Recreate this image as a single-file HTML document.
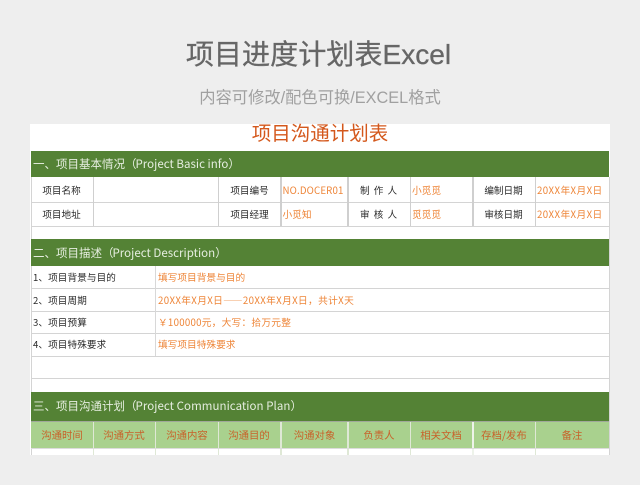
<!DOCTYPE html>
<html lang="zh">
<head>
<meta charset="utf-8">
<style>
html,body{margin:0;padding:0;background:#eeeeee;}
body{width:640px;height:485px;position:relative;overflow:hidden;font-family:"Liberation Sans","Noto Sans CJK SC",sans-serif;}
div{position:absolute;white-space:nowrap;}
.h{background:#548235;left:31px;width:578px;}
.ht{color:#e6eee0;font-family:"Noto Sans CJK SC",sans-serif;font-size:11.5px;left:33px;line-height:20px;}
.ht span{letter-spacing:.02px;margin-left:-1px;}
.hl{background:#d4d4d4;left:31px;width:578px;height:1px;}
.v{background:#cfcfcf;width:1.4px;}
.c{font-family:"Noto Sans CJK SC",sans-serif;font-size:9.6px;line-height:14px;color:#2a2a2a;text-align:center;}
.o{font-family:"Noto Sans CJK SC",sans-serif;font-size:9.7px;line-height:14px;color:#ee8538;}
.d{font-family:"Noto Sans CJK SC",sans-serif;font-size:9.6px;line-height:14px;color:#2a2a2a;left:33px;letter-spacing:.1px;}
.g{font-family:"Noto Sans CJK SC",sans-serif;font-size:10.4px;line-height:14px;color:#c8622a;text-align:center;top:428px;}
</style>
</head>
<body>
<div style="left:-1.5px;width:640px;top:33px;text-align:center;font-size:28.1px;line-height:44px;color:#666;-webkit-text-stroke:.3px #666;">项目进度计划表Excel</div>
<div style="left:0;width:640px;top:86px;text-align:center;font-size:16.3px;line-height:24px;color:#a0a0a0;">内容可修改/配色可换/EXCEL格式</div>

<div style="left:30px;top:124px;width:580px;height:331px;background:#fff;"></div>
<div style="left:30px;width:580px;top:121px;text-align:center;font-size:19.5px;line-height:26px;color:#d4581c;">项目沟通计划表</div>

<div class="h" style="top:150.5px;height:26.5px;"></div>
<div class="ht" style="top:154px;">一、项目基本情况（<span>Project Basic info</span>）</div>

<div class="hl" style="top:202px;"></div>
<div class="hl" style="top:226px;"></div>

<div class="v" style="left:30.5px;top:177px;height:278px;background:#d4d4d4;"></div>
<div class="v" style="left:608.6px;top:177px;height:278px;background:#d4d4d4;"></div>

<div class="v" style="left:92.5px;top:177px;height:49px;"></div>
<div class="v" style="left:218px;top:177px;height:49px;"></div>
<div class="v" style="left:280.3px;top:177px;height:49px;"></div>
<div class="v" style="left:347.3px;top:177px;height:49px;"></div>
<div class="v" style="left:409.6px;top:177px;height:49px;"></div>
<div class="v" style="left:472.2px;top:177px;height:49px;"></div>
<div class="v" style="left:534.6px;top:177px;height:49px;"></div>

<div class="c" style="left:31px;width:61px;top:183px;">项目名称</div>
<div class="c" style="left:31px;width:61px;top:207px;">项目地址</div>
<div class="c" style="left:219px;width:61px;top:183px;">项目编号</div>
<div class="c" style="left:219px;width:61px;top:207px;">项目经理</div>
<div class="o" style="left:282.5px;top:183px;letter-spacing:.15px;">NO.DOCER01</div>
<div class="o" style="left:282.5px;top:207px;">小觅知</div>
<div class="c" style="left:348px;width:61px;top:183px;word-spacing:2px;">制 作 人</div>
<div class="c" style="left:348px;width:61px;top:207px;word-spacing:2px;">审 核 人</div>
<div class="o" style="left:412px;top:183px;">小觅觅</div>
<div class="o" style="left:412px;top:207px;">觅觅觅</div>
<div class="c" style="left:473px;width:61px;top:183px;">编制日期</div>
<div class="c" style="left:473px;width:61px;top:207px;">审核日期</div>
<div class="o" style="left:537px;top:183px;letter-spacing:.4px;">20XX年X月X日</div>
<div class="o" style="left:537px;top:207px;letter-spacing:.4px;">20XX年X月X日</div>

<div class="h" style="top:239px;height:27px;"></div>
<div class="ht" style="top:243px;">二、项目描述（<span>Project Description</span>）</div>

<div class="hl" style="top:288px;"></div>
<div class="hl" style="top:311px;"></div>
<div class="hl" style="top:333px;"></div>
<div class="hl" style="top:356px;"></div>
<div class="hl" style="top:378px;"></div>
<div class="v" style="left:155px;top:266px;height:90px;width:1px;background:#d8d8d8;"></div>

<div class="d" style="top:270px;">1、项目背景与目的</div>
<div class="d" style="top:292.5px;">2、项目周期</div>
<div class="d" style="top:315px;">3、项目预算</div>
<div class="d" style="top:337px;">4、项目特殊要求</div>
<div class="o" style="left:158px;top:270px;">填写项目背景与目的</div>
<div class="o" style="left:158px;top:292.5px;letter-spacing:.35px;">20XX年X月X日——20XX年X月X日，共计X天</div>
<div class="o" style="left:158px;top:315px;letter-spacing:.25px;">￥100000元，大写：拾万元整</div>
<div class="o" style="left:158px;top:337px;">填写项目特殊要求</div>

<div class="h" style="top:392px;height:29px;"></div>
<div class="ht" style="top:396px;">三、项目沟通计划（<span style="letter-spacing:.05px;">Project Communication Plan</span>）</div>

<div style="left:31px;top:421px;width:578px;height:1px;background:#a0a89a;"></div>
<div style="left:31px;top:422px;width:578px;height:26px;background:#a9d18e;"></div>
<div class="v" style="left:92.5px;top:422px;height:33px;background:#dfe8d6;"></div>
<div class="v" style="left:155px;top:422px;height:33px;background:#dfe8d6;"></div>
<div class="v" style="left:218px;top:422px;height:33px;background:#dfe8d6;"></div>
<div class="v" style="left:280.3px;top:422px;height:33px;background:#dfe8d6;"></div>
<div class="v" style="left:347.3px;top:422px;height:33px;background:#dfe8d6;"></div>
<div class="v" style="left:409.6px;top:422px;height:33px;background:#dfe8d6;"></div>
<div class="v" style="left:472.2px;top:422px;height:33px;background:#eef3ea;"></div>
<div class="v" style="left:534.6px;top:422px;height:33px;background:#dfe8d6;"></div>
<div style="left:31px;top:448px;width:578px;height:1px;background:#dcdcdc;"></div>

<div class="g" style="left:31px;width:62px;">沟通时间</div>
<div class="g" style="left:93px;width:62px;">沟通方式</div>
<div class="g" style="left:156px;width:62px;">沟通内容</div>
<div class="g" style="left:218px;width:62px;">沟通目的</div>
<div class="g" style="left:281px;width:67px;">沟通对象</div>
<div class="g" style="left:348px;width:62px;">负责人</div>
<div class="g" style="left:410px;width:62px;">相关文档</div>
<div class="g" style="left:473px;width:62px;">存档/发布</div>
<div class="g" style="left:535px;width:74px;">备注</div>
</body>
</html>
